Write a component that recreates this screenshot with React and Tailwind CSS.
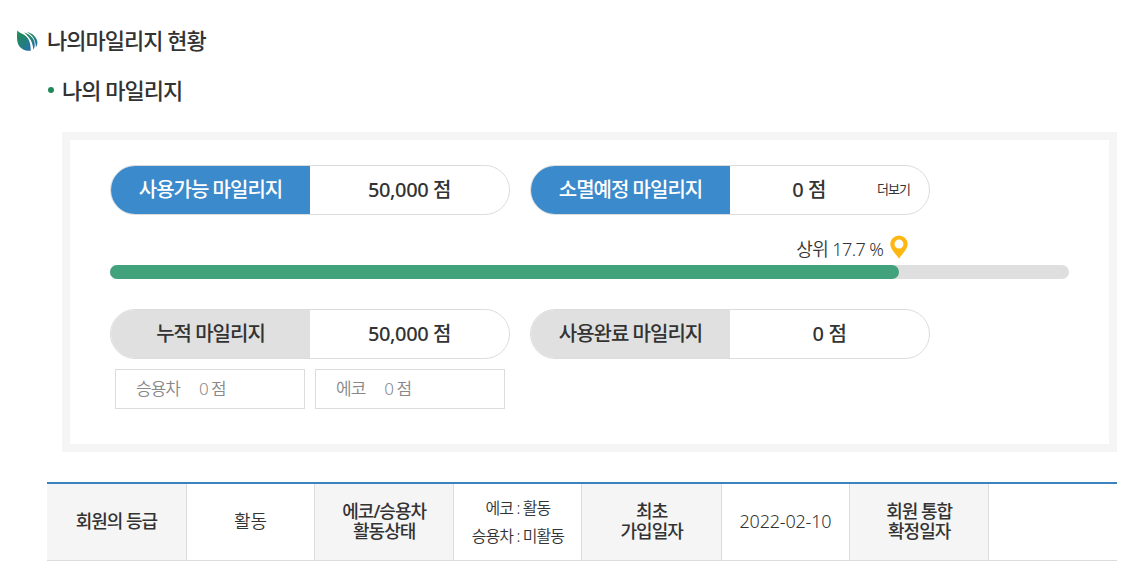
import React from 'react';

const memberInfo = [
    { label: '회원의 등급', value: ['활동'] },
    { label: '에코/승용차\n활동상태', value: ['에코 : 활동', '승용차 : 미활동'] },
    { label: '최초\n가입일자', value: ['2022-02-10'] },
    { label: '회원 통합\n확정일자', value: [] },
];

const LeafIcon = () => (
    <svg width="22" height="22" viewBox="0 0 22 22" className="mt-0.5 shrink-0">
        <defs>
            <linearGradient id="leaf" x1="0" y1="0" x2="0.8" y2="1">
                <stop offset="0.2" stopColor="#218a5b" />
                <stop offset="1" stopColor="#2572a0" />
            </linearGradient>
        </defs>
        <path d="M1.3 0.5C4 3.5 9 4.2 12 8.5C14.3 12 14.6 16 14.8 20.8C9.5 21.3 4.5 19 2.3 14.5C0.5 10.5 1 5 1.3 0.5Z" fill="url(#leaf)" />
        <path d="M8 2.5C12.5 3.5 16.7 7 18.3 11.5C19.2 14.5 18.8 17.5 17.4 19.8C16.8 13.5 15 8 8 2.5Z" fill="url(#leaf)" />
        <path d="M11 2C16 3 20 6.5 21.2 11C21.8 13.5 21 15.8 19.9 17.3C19.7 10.5 17.3 5.7 11 2Z" fill="url(#leaf)" />
    </svg>
);

const PinIcon = () => (
    <svg width="18" height="24" viewBox="0 0 18 24" className="shrink-0">
        <path
            fillRule="evenodd"
            fill="#fdb713"
            d="M9 0.5A8.7 8.7 0 0 1 17.7 9.2C17.7 13.5 12.5 18.5 9 23.8C5.5 18.5 0.3 13.5 0.3 9.2A8.7 8.7 0 0 1 9 0.5ZM9 4.6A4.5 4.5 0 1 0 9 13.6A4.5 4.5 0 0 0 9 4.6Z"
        />
    </svg>
);

const MileagePill = ({ label, value, active, more }) => (
    <div className="flex h-[50px] w-[400px] overflow-hidden rounded-full border border-[#dcdcdc] text-xl font-medium tracking-[-1px]">
        <div
            className={`flex w-[199px] items-center justify-center ${
                active ? 'bg-[#3b8acb] text-white' : 'bg-[#e0e0e0]'
            }`}
        >
            {label}
        </div>
        <div className={`flex flex-1 items-center ${more ? 'justify-end pr-[19px]' : 'justify-center'}`}>
            <span className="font-[470] tracking-[-0.4px]">{value} 점</span>
            {more && <button className="ml-[51px] pb-0.5 text-[13px] font-normal">더보기</button>}
        </div>
    </div>
);

const SubMileage = ({ label, value }) => (
    <div className="flex h-10 w-[190px] items-center gap-[19px] border border-[#dcdcdc] pl-5 text-[17px] font-[350] tracking-[-1px] text-[#888]">
        <span>{label}</span>
        <span>{value} 점</span>
    </div>
);

const App = () => {
    const rank = 17.7;

    return (
        <div className="h-[583px] bg-white pt-6 font-['Noto_Sans','Noto_Sans_CJK_KR',sans-serif] text-[#333]">
            <h2 className="flex h-8 items-center gap-[9px] pl-4 text-[22px] leading-8 font-medium tracking-[-1px]">
                <LeafIcon />
                나의마일리지 현황
            </h2>
            <h3 className="mt-[18px] flex h-8 items-center gap-2 pl-12 text-[22px] leading-8 font-medium tracking-[-1px]">
                <span className="h-1.5 w-1.5 rounded-full bg-[#218a5b]"></span>
                나의 마일리지
            </h3>

            <div className="mt-[26px] ml-[62px] h-80 w-[1055px] border-8 border-[#f5f5f5] px-10 pt-[25px]">
                <div className="flex gap-5">
                    <MileagePill label="사용가능 마일리지" value="50,000" active />
                    <MileagePill label="소멸예정 마일리지" value="0" active more />
                </div>

                <div className="mt-5 w-[959px]">
                    <div
                        className="flex h-[30px] items-start justify-end gap-[7px] text-lg leading-6 font-[350] tracking-[-0.6px]"
                        style={{ width: `calc(${100 - rank}% + 9px)` }}
                    >
                        <span className="pt-0.5">상위 {rank} %</span>
                        <PinIcon />
                    </div>
                    <div className="h-3.5 rounded-full bg-[#dfdfdf]">
                        <div className="h-full rounded-full bg-[#41a27c]" style={{ width: `${100 - rank}%` }}></div>
                    </div>
                </div>

                <div className="mt-[30px] flex gap-5">
                    <MileagePill label="누적 마일리지" value="50,000" />
                    <MileagePill label="사용완료 마일리지" value="0" />
                </div>
                <div className="mt-2.5 flex gap-2.5 pl-[5px]">
                    <SubMileage label="승용차" value="0" />
                    <SubMileage label="에코" value="0" />
                </div>
            </div>

            <table className="mt-[30px] ml-[47px] w-[1070px] table-fixed border-collapse border-t-2 border-b border-t-[#3b83bf] border-b-[#dcdcdc] text-center text-lg leading-5 tracking-[-1px]">
                <colgroup>
                    {memberInfo.map((item) => (
                        <React.Fragment key={item.label}>
                            <col className="w-[139.3px]" />
                            <col className="w-32" />
                        </React.Fragment>
                    ))}
                </colgroup>
                <tbody>
                    <tr className="h-[77px]">
                        {memberInfo.map((item) => (
                            <React.Fragment key={item.label}>
                                <th className="border-r border-[#dcdcdc] bg-[#f5f5f5] p-0 pb-0.5 font-medium whitespace-pre-line">
                                    {item.label}
                                </th>
                                <td className="border-r border-[#dcdcdc] p-0 font-[350] last:border-r-0">
                                    {item.value.map((line) => (
                                        <div
                                            key={line}
                                            className={
                                                item.value.length > 1
                                                    ? 'text-base leading-7 tracking-[-0.9px]'
                                                    : 'pb-0.5 tracking-[-0.2px]'
                                            }
                                        >
                                            {line}
                                        </div>
                                    ))}
                                </td>
                            </React.Fragment>
                        ))}
                    </tr>
                </tbody>
            </table>
        </div>
    );
};

export default App;
